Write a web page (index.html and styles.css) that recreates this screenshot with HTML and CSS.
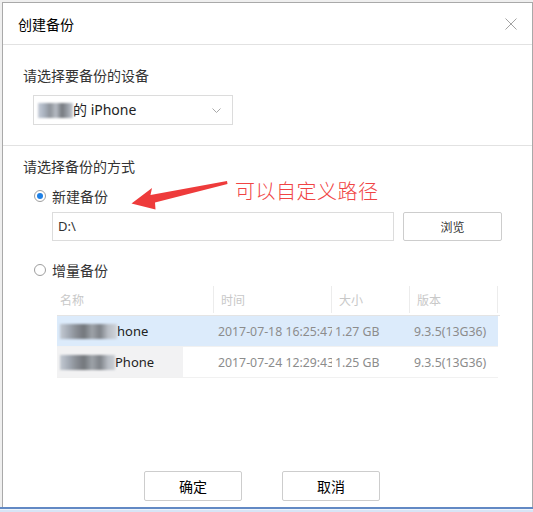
FILE: index.html
```html
<!DOCTYPE html>
<html lang="zh-CN">
<head>
<meta charset="utf-8">
<title>创建备份</title>
<link rel="stylesheet" href="styles.css">
</head>
<body>
<div class="screen">
  <div class="dialog">
    <div class="header">
      <span class="title">创建备份</span>
      <svg class="close" width="12" height="12" viewBox="0 0 12 12"><path d="M0.5 0.5 L11.5 11.5 M11.5 0.5 L0.5 11.5" stroke="#a3a3a3" stroke-width="1" fill="none"/></svg>
    </div>

    <div class="section device">
      <div class="label">请选择要备份的设备</div>
      <div class="select">
        <span class="blur blur-sel"></span>
        <span class="select-text">的 iPhone</span>
        <svg class="chev" width="9" height="5" viewBox="0 0 9 5"><path d="M0.5 0.5 L4.5 4.5 L8.5 0.5" stroke="#a8a8a8" stroke-width="1" fill="none"/></svg>
      </div>
    </div>

    <div class="section mode">
      <div class="label">请选择备份的方式</div>
      <div class="radio-row first">
        <span class="radio checked"></span><span>新建备份</span>
      </div>
      <div class="path-row">
        <div class="input">D:\</div>
        <div class="btn small">浏览</div>
      </div>
      <div class="radio-row second">
        <span class="radio"></span><span>增量备份</span>
      </div>
      <div class="table">
        <div class="tr head">
          <div class="td c1">名称</div>
          <div class="td c2">时间</div>
          <div class="td c3">大小</div>
          <div class="td c4">版本</div>
        </div>
        <div class="tr row selected">
          <div class="td c1"><span class="blur blur-name"></span><span class="name">hone</span></div>
          <div class="td c2">2017-07-18 16:25:47</div>
          <div class="td c3">1.27 GB</div>
          <div class="td c4">9.3.5(13G36)</div>
        </div>
        <div class="tr row hover">
          <div class="td c1"><span class="blur blur-name b2"></span><span class="name">Phone</span></div>
          <div class="td c2">2017-07-24 12:29:43</div>
          <div class="td c3">1.25 GB</div>
          <div class="td c4">9.3.5(13G36)</div>
        </div>
      </div>
    </div>

    <div class="footer">
      <div class="btn big">确定</div>
      <div class="btn big">取消</div>
    </div>

    <svg class="arrow" width="529" height="504" viewBox="3 3 529 504">
      <path d="M131.5 203.5 L152 188 L150.5 195 L227 181 L227.5 184 L155 202.5 L155.5 209.5 Z" fill="#ee3b3b"/>
    </svg>
    <div class="note">可以自定义路径</div>
  </div>
  <div class="taskbar"></div>
</div>
</body>
</html>
```

FILE: styles.css
```css
* { box-sizing: border-box; }
html, body { margin: 0; padding: 0; }
body {
  width: 533px;
  height: 512px;
  overflow: hidden;
  background: #efefef;
  font-family: "Noto Sans", "Noto Sans CJK SC", sans-serif;
  color: #333;
}
.screen {
  padding-top: 2px;
}
.dialog {
  position: relative;
  margin-left: 2px;
  width: 531px;
  height: 505px;
  background: #fff;
  border: 1px solid #a9a9a9;
  border-bottom: none;
  display: flex;
  flex-direction: column;
}
.header {
  height: 42px;
  padding: 2px 0 0 15px;
  border-bottom: 1px solid #e2e2e2;
  display: flex;
  align-items: center;
}
.title {
  font-size: 14px;
  color: #000;
  line-height: 20px;
}
.close {
  margin-left: auto;
  margin-right: 15px;
  margin-top: -1px;
}
.label {
  font-size: 14px;
  line-height: 20px;
  color: #333;
  padding-left: 20px;
}
.device {
  padding-top: 21px;
  padding-bottom: 20px;
  border-bottom: 1px solid #e2e2e2;
}
.select {
  margin: 9px 0 0 30px;
  width: 200px;
  height: 30px;
  border: 1px solid #dcdcdc;
  display: flex;
  align-items: center;
  padding-left: 4px;
  font-size: 14px;
  color: #222;
}
.select-text { line-height: 20px; }
.chev { margin-left: auto; margin-right: 11px; }
.blur {
  display: inline-block;
  filter: blur(1.2px);
}
.blur-sel {
  width: 35px;
  height: 15px;
  background: linear-gradient(to right, #c6cdd8 0, #aab3c0 6px, #8e939a 12px, #b7bcc4 18px, #75797f 24px, #9da2aa 30px, #c9ced6 35px);
}
.mode {
  padding-top: 11px;
  position: relative;
}
.radio-row {
  display: flex;
  align-items: center;
  padding-left: 31px;
  height: 20px;
  font-size: 14px;
  color: #333;
  gap: 6px;
}
.radio-row.first { margin-top: 9px; }
.radio-row.second { margin-top: 19px; }
.radio {
  width: 12px;
  height: 12px;
  border: 1px solid #9e9e9e;
  border-radius: 50%;
  display: flex;
  align-items: center;
  justify-content: center;
}
.radio.checked::after {
  content: "";
  width: 6px;
  height: 6px;
  border-radius: 50%;
  background: #1e80e6;
}
.path-row {
  display: flex;
  margin-top: 6px;
  padding-left: 49px;
  gap: 9px;
}
.input {
  width: 342px;
  height: 29px;
  border: 1px solid #dcdcdc;
  font-size: 13px;
  line-height: 27px;
  padding-left: 5px;
  color: #333;
}
.btn {
  border: 1px solid #cdcdcd;
  border-radius: 2px;
  display: flex;
  align-items: center;
  justify-content: center;
  background: #fff;
}
.btn.small {
  width: 99px;
  height: 29px;
  font-size: 12px;
  color: #333;
}
.table {
  margin: 6px 0 0 54px;
  width: 443px;
  font-size: 12px;
}
.tr {
  display: flex;
}
.td {
  white-space: nowrap;
  overflow: hidden;
  display: flex;
  align-items: center;
}
.c1 { width: 157px; }
.c2 { width: 118px; }
.c3 { width: 78px; }
.c4 { width: 88px; }
.head {
  height: 30px;
  border-bottom: 1px solid #e4e4e4;
  color: #c8c8c8;
}
.head .td {
  border-right: 1px solid #ececec;
  padding-left: 7px;
  height: 27px;
}
.head .c1 { padding-left: 3px; }
.row {
  height: 31px;
  border-bottom: 1px solid #f1f1f1;
  color: #8c8c8c;
  width: 441px;
}
.row .td { padding-left: 3px; }
.row .c2 { padding-left: 4px; font-size: 12.3px; }
.row .c3 { font-size: 12.3px; }
.row .c4 { padding-left: 4px; font-size: 12.3px; }
.selected { background: #dcebfb; }
.hover .c1 {
  background: linear-gradient(to right, #f2f2f3 126px, #fff 126px);
}
.name {
  font-size: 13px;
  color: #222;
}
.blur-name {
  width: 57px;
  height: 15px;
  background: linear-gradient(to right, #c4cad3 0, #a6adb7 8px, #8a8f96 16px, #73777c 24px, #9ea3a9 32px, #7e8288 40px, #b9bec5 48px, #d0d4da 57px);
}
.blur-name.b2 { width: 55px; }
.footer {
  margin-top: auto;
  padding: 0 0 6px 141px;
  display: flex;
  gap: 40px;
}
.btn.big {
  width: 98px;
  height: 30px;
  font-size: 14px;
  color: #000;
}
.arrow {
  position: absolute;
  left: 0;
  top: 0;
  pointer-events: none;
}
.note {
  position: absolute;
  left: 232px;
  top: 177px;
  font-size: 20px;
  font-weight: 300;
  line-height: 24px;
  color: #f04444;
  letter-spacing: 0.5px;
}
.taskbar {
  height: 6px;
  border-top: 2px solid #6289c4;
  background: linear-gradient(#eef4fb 0 1px, #d7e5f6 1px);
}
```
